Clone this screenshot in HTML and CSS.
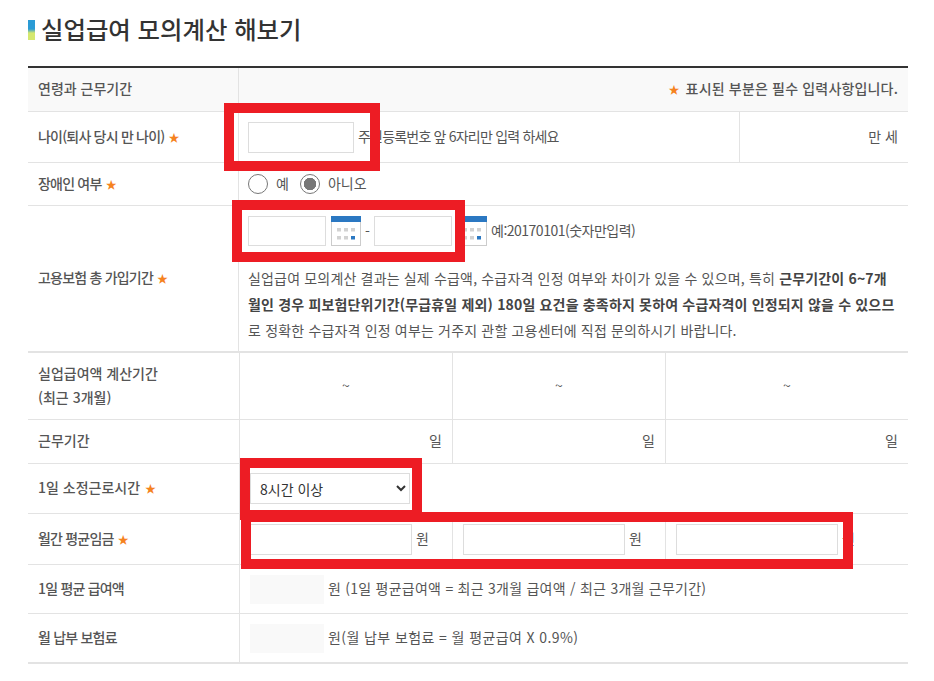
FILE: index.html
```html
<!DOCTYPE html>
<html lang="ko">
  <head>
    <meta charset="UTF-8" />
    <title>실업급여 모의계산 해보기</title>
    <link rel="stylesheet" href="styles.css">
  </head>
  <body>
    <div class="page">
      <h1 class="title">실업급여 모의계산 해보기</h1>

      <!-- 위쪽 표 -->
      <table class="calc calc-top">
        <colgroup>
          <col class="col-head-top" />
          <col class="col-main" />
          <col class="col-unit" />
        </colgroup>
        <tr class="row-notice">
          <th>연령과 근무기간</th>
          <td colspan="2" class="right notice"><span class="star">★</span> 표시된 부분은 필수 입력사항입니다.</td>
        </tr>
        <tr class="row-age">
          <th class="tight">나이(퇴사 당시 만 나이) <span class="star">★</span></th>
          <td class="pad-top">
            <div class="inline">
              <input type="text" class="box box-age" />
              <span class="tight lift">주민등록번호 앞 6자리만 입력 하세요</span>
            </div>
          </td>
          <td class="right">만 세</td>
        </tr>
        <tr class="row-disabled">
          <th class="tight">장애인 여부 <span class="star">★</span></th>
          <td colspan="2" class="pad-top">
            <div class="inline radios">
              <input type="radio" name="disabled" class="radio" />
              <span class="radio-label lift">예</span>
              <input type="radio" name="disabled" class="radio" checked />
              <span class="lift">아니오</span>
            </div>
          </td>
        </tr>
        <tr class="row-period">
          <th class="tight">고용보험 총 가입기간 <span class="star">★</span></th>
          <td colspan="2" class="pad-top period">
            <div class="inline dates">
              <input type="text" class="box box-date" />
              <svg class="cal" width="30" height="30" viewBox="0 0 30 30">
                <rect x="0.5" y="0.5" width="29" height="29" fill="#fff" stroke="#ccc" />
                <rect width="30" height="6" fill="#2b78c2" />
                <path fill="#d2d2d2" d="M6 12h4v3.5H6zM13 12h4v3.5h-4zM20 12h4v3.5h-4zM6 20h4v3.5H6zM13 20h4v3.5h-4z" />
                <rect x="20" y="20" width="4" height="3.5" fill="#2b78c2" />
              </svg>
              <span class="dash">-</span>
              <input type="text" class="box box-date" />
              <svg class="cal" width="30" height="30" viewBox="0 0 30 30">
                <rect x="0.5" y="0.5" width="29" height="29" fill="#fff" stroke="#ccc" />
                <rect width="30" height="6" fill="#2b78c2" />
                <path fill="#d2d2d2" d="M6 12h4v3.5H6zM13 12h4v3.5h-4zM20 12h4v3.5h-4zM6 20h4v3.5H6zM13 20h4v3.5h-4z" />
                <rect x="20" y="20" width="4" height="3.5" fill="#2b78c2" />
              </svg>
              <span class="date-hint lift">예:20170101(숫자만입력)</span>
            </div>
            <p class="guide">실업급여 모의계산 결과는 실제 수급액, 수급자격 인정 여부와 차이가 있을 수 있으며, 특히 <b>근무기간이 6~7개월인 경우 피보험단위기간(무급휴일 제외) 180일 요건을 충족하지 못하여 수급자격이 인정되지 않을 수 있으므</b>로 정확한 수급자격 인정 여부는 거주지 관할 고용센터에 직접 문의하시기 바랍니다.</p>
          </td>
        </tr>
      </table>

      <!-- 아래쪽 표 -->
      <table class="calc calc-bottom">
        <colgroup>
          <col class="col-head" />
          <col class="col-month" />
          <col class="col-month" />
          <col />
        </colgroup>
        <tr class="row-range">
          <th>실업급여액 계산기간<br />(최근 3개월)</th>
          <td class="center">~</td>
          <td class="center">~</td>
          <td class="center">~</td>
        </tr>
        <tr class="row-days">
          <th>근무기간</th>
          <td class="right">일</td>
          <td class="right">일</td>
          <td class="right">일</td>
        </tr>
        <tr class="row-hours">
          <th>1일 소정근로시간 <span class="star">★</span></th>
          <td colspan="3">
            <select class="hours">
              <option>8시간 이상</option>
            </select>
          </td>
        </tr>
        <tr class="row-wage">
          <th class="tight">월간 평균임금 <span class="star">★</span></th>
          <td><div class="inline"><input type="text" class="box box-wage" /><span class="lift">원</span></div></td>
          <td><div class="inline"><input type="text" class="box box-wage" /><span class="lift">원</span></div></td>
          <td><div class="inline"><input type="text" class="box box-wage" /><span class="lift">원</span></div></td>
        </tr>
        <tr class="row-daily">
          <th class="tight">1일 평균 급여액</th>
          <td colspan="3">
            <div class="inline"><span class="readonly"></span><span class="lift wide">원 (1일 평균급여액 = 최근 3개월 급여액 / 최근 3개월 근무기간)</span></div>
          </td>
        </tr>
        <tr class="row-fee">
          <th class="tight">월 납부 보험료</th>
          <td colspan="3">
            <div class="inline"><span class="readonly"></span><span class="lift wider">원(월 납부 보험료 = 월 평균급여 X 0.9%)</span></div>
          </td>
        </tr>
      </table>

      <!-- 빨간 표시 -->
      <div class="mark mark-age"></div>
      <div class="mark mark-date"></div>
      <div class="mark mark-hours"></div>
      <div class="mark mark-wage"></div>
    </div>
  </body>
</html>
```

FILE: styles.css
```css
* {
  box-sizing: border-box;
}
body {
  margin: 0;
  background: #fff;
  font-family: "Noto Sans CJK KR", "Noto Sans", sans-serif;
  font-size: 14px;
  color: #555;
}
.page {
  position: relative;
  width: 934px;
  height: 681px;
  padding: 12px 26px 0 28px;
  overflow: hidden;
}
.title {
  margin: 0 0 20px;
  height: 34px;
  padding-left: 13px;
  font-size: 24.4px;
  line-height: 34px;
  font-weight: 500;
  color: #333;
  background: linear-gradient(#2b9bd5 0, #2b9bd5 9px, #d5e86f 13px, #d5e86f 20px) no-repeat 0 8px / 7px 20px;
}
.calc {
  width: 880px;
  table-layout: fixed;
  border-collapse: separate;
  border-spacing: 0;
}
.calc th {
  padding: 0 0 3px 10px;
  text-align: left;
  font-weight: 500;
  color: #555;
  border-right: 1px solid #e3e3e3;
  border-bottom: 1px solid #e3e3e3;
}
.calc td {
  padding: 0 10px;
  border-right: 1px solid #e3e3e3;
  border-bottom: 1px solid #e3e3e3;
}
.calc td:last-child {
  border-right: 0;
}
.calc .right,
.calc .center {
  padding-bottom: 3px;
}
.calc-top {
  border-top: 2px solid #333;
}
.calc-top td.pad-top {
  padding-left: 9px;
}
.calc-top tr:last-child th,
.calc-top tr:last-child td {
  border-bottom: 2px solid #e3e3e3;
}
.calc-bottom tr:last-child th,
.calc-bottom tr:last-child td {
  border-bottom: 2px solid #e3e3e3;
}
.col-head-top {
  width: 211px;
}
.col-unit {
  width: 168px;
}
.col-head {
  width: 212px;
}
.col-month {
  width: 213px;
}
.row-notice {
  height: 44px;
}
.row-notice th,
.row-notice td {
  background: #f9f9f9;
}
.row-age {
  height: 51px;
}
.row-disabled {
  height: 43px;
}
.row-period {
  height: 147px;
}
.row-range {
  height: 67px;
}
.row-range th {
  line-height: 24px;
}
.row-days {
  height: 44px;
}
.row-hours {
  height: 50px;
}
.row-wage {
  height: 51px;
}
.row-daily {
  height: 49px;
}
.row-fee {
  height: 50px;
}
.right {
  text-align: right;
}
.center {
  text-align: center;
}
.notice {
  font-weight: 500;
  letter-spacing: 0.17px;
}
.star {
  margin-left: 1px;
  font-size: 11px;
  letter-spacing: 0;
  color: #f58220;
}
.notice .star {
  margin: 0 2px 0 0;
}
.inline {
  display: flex;
  align-items: center;
}
.tight {
  letter-spacing: -0.8px;
}
.wide {
  letter-spacing: 0.25px;
}
.wider {
  letter-spacing: 0.4px;
}
.lift {
  margin-bottom: 2px;
}
.box {
  display: block;
  height: 31px;
  padding: 0 6px;
  background: #fff;
  border: 1px solid #ddd;
}
.box-age {
  width: 106px;
  margin-right: 4px;
}
.box-date {
  width: 78px;
  height: 30px;
}
.box-wage {
  width: 162px;
  margin-right: 4px;
}
.radio {
  appearance: none;
  width: 20px;
  height: 20px;
  margin: 0 8px 0 0;
  border: 1px solid #777;
  border-radius: 50%;
  background: #fff;
}
.radio:checked {
  background: radial-gradient(circle, #777 0, #777 6px, #fff 6.5px);
}
.radio-label {
  margin-right: 11px;
}
.calc td.period {
  vertical-align: top;
  padding-top: 10px;
}
.cal {
  display: block;
  margin-left: 5px;
}
.dash {
  width: 13px;
  text-align: center;
}
.date-hint {
  margin-left: 4px;
  letter-spacing: -0.5px;
}
.guide {
  margin: 19px 0 0;
  width: 650px;
  line-height: 26px;
  letter-spacing: 0.17px;
  word-break: break-all;
}
.guide b {
  font-weight: 700;
  color: #444;
}
.hours {
  display: block;
  width: 160px;
  height: 31px;
  padding-left: 5px;
  background: #fff;
  border: 1px solid #ddd;
  font-family: inherit;
  font-size: 14px;
  color: #333;
}
.readonly {
  display: block;
  width: 74px;
  height: 29px;
  margin-right: 4px;
  background: #f9f9f9;
}
.mark {
  position: absolute;
  border: 10px solid #ed1c24;
}
.mark-age {
  left: 224px;
  top: 103px;
  width: 156px;
  height: 68px;
}
.mark-date {
  left: 232px;
  top: 200px;
  width: 233px;
  height: 62px;
}
.mark-hours {
  left: 240px;
  top: 458px;
  width: 182px;
  height: 62px;
}
.mark-wage {
  left: 241px;
  top: 512px;
  width: 612px;
  height: 57px;
}
```
